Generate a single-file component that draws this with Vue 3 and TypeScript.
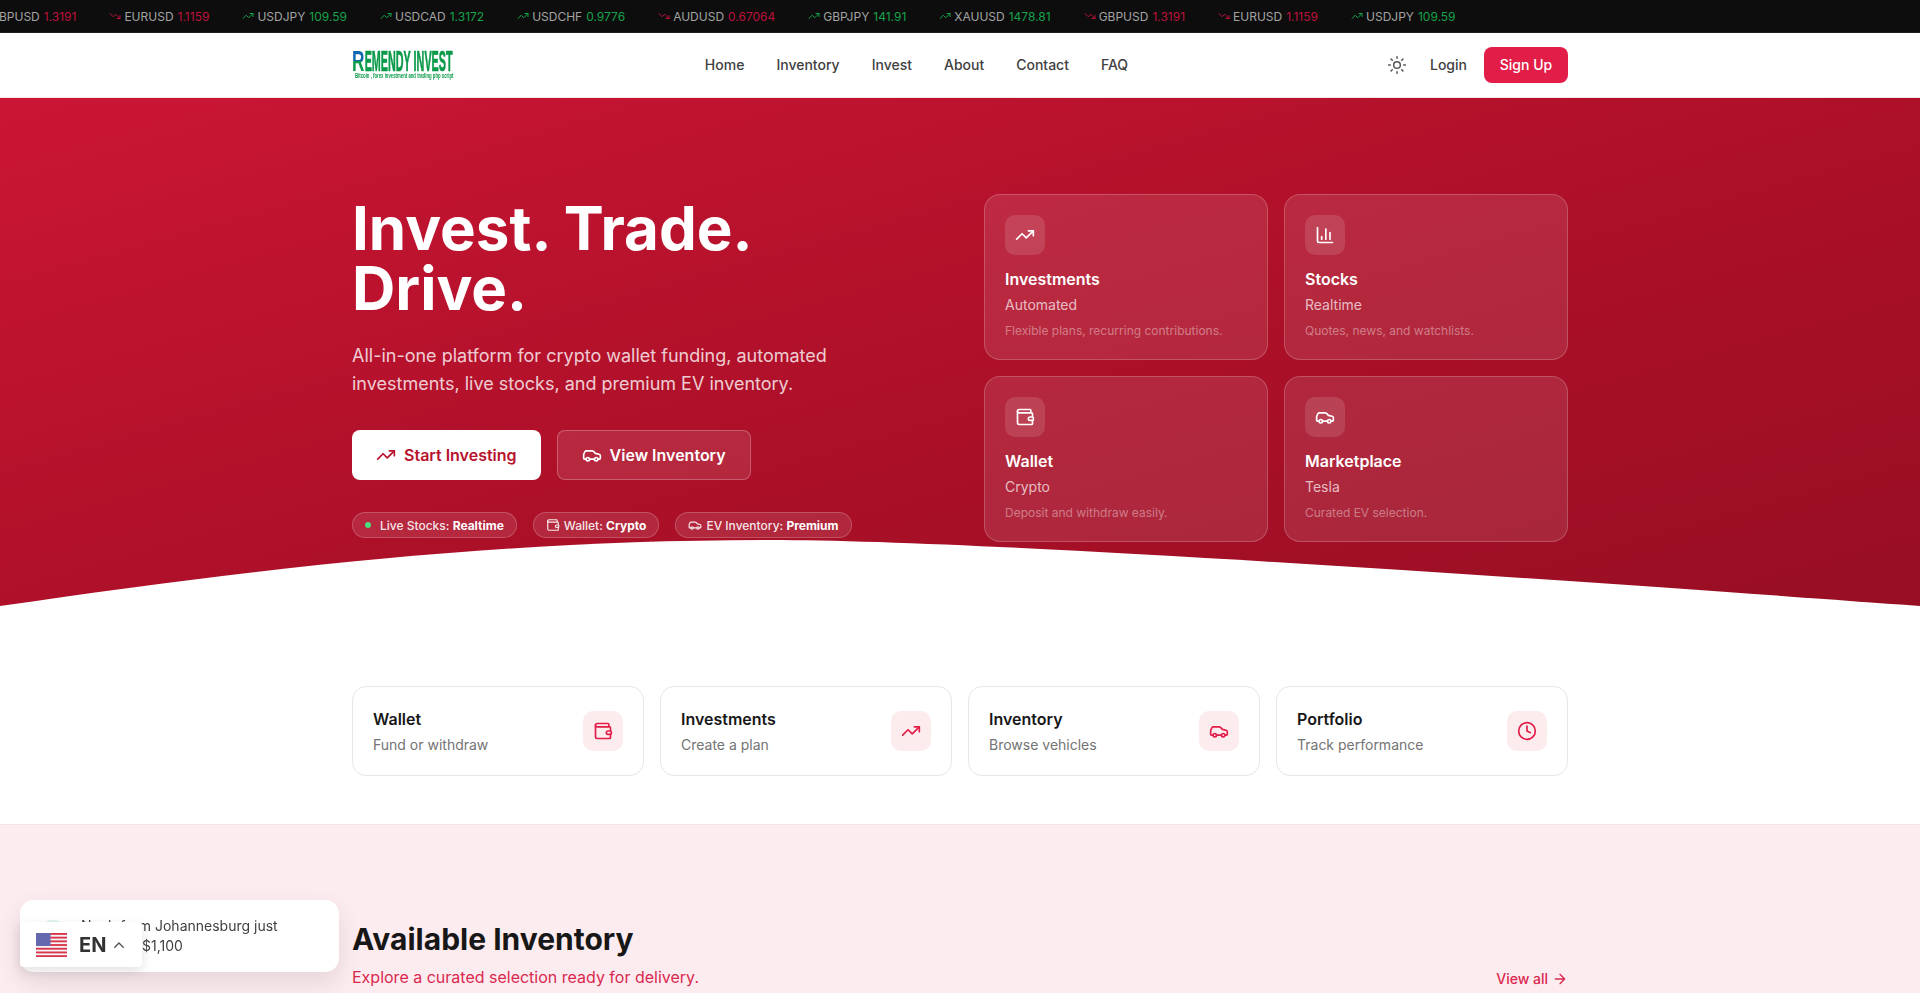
<script setup lang="ts">
interface Quote {
  pair: string
  price: string
  up: boolean
}

const quotes: Quote[] = [
  { pair: 'GBPUSD', price: '1.3191', up: false },
  { pair: 'EURUSD', price: '1.1159', up: false },
  { pair: 'USDJPY', price: '109.59', up: true },
  { pair: 'USDCAD', price: '1.3172', up: true },
  { pair: 'USDCHF', price: '0.9776', up: true },
  { pair: 'AUDUSD', price: '0.67064', up: false },
  { pair: 'GBPJPY', price: '141.91', up: true },
  { pair: 'XAUUSD', price: '1478.81', up: true },
  { pair: 'GBPUSD', price: '1.3191', up: false },
  { pair: 'EURUSD', price: '1.1159', up: false },
  { pair: 'USDJPY', price: '109.59', up: true },
]

const navLinks = ['Home', 'Inventory', 'Invest', 'About', 'Contact', 'FAQ']

type IconName = 'trend' | 'chart' | 'wallet' | 'car' | 'clock'

const heroCards: { title: string; sub: string; desc: string; icon: IconName }[] = [
  { title: 'Investments', sub: 'Automated', desc: 'Flexible plans, recurring contributions.', icon: 'trend' },
  { title: 'Stocks', sub: 'Realtime', desc: 'Quotes, news, and watchlists.', icon: 'chart' },
  { title: 'Wallet', sub: 'Crypto', desc: 'Deposit and withdraw easily.', icon: 'wallet' },
  { title: 'Marketplace', sub: 'Tesla', desc: 'Curated EV selection.', icon: 'car' },
]

const quickCards: { title: string; sub: string; icon: IconName }[] = [
  { title: 'Wallet', sub: 'Fund or withdraw', icon: 'wallet' },
  { title: 'Investments', sub: 'Create a plan', icon: 'trend' },
  { title: 'Inventory', sub: 'Browse vehicles', icon: 'car' },
  { title: 'Portfolio', sub: 'Track performance', icon: 'clock' },
]

const iconPaths: Record<IconName, string[]> = {
  trend: ['M16 7h6v6', 'm22 7-8.5 8.5-5-5L2 17'],
  chart: ['M3 3v16a2 2 0 0 0 2 2h16', 'M18 17V9', 'M13 17V5', 'M8 17v-3'],
  wallet: [
    'M19 7V4a1 1 0 0 0-1-1H5a2 2 0 0 0 0 4h15a1 1 0 0 1 1 1v4h-3a2 2 0 0 0 0 4h3a1 1 0 0 0 1-1v-2a1 1 0 0 0-1-1',
    'M3 5v14a2 2 0 0 0 2 2h15a1 1 0 0 0 1-1v-4',
  ],
  car: [
    'M19 17h2c.6 0 1-.4 1-1v-3c0-.9-.7-1.7-1.5-1.9C18.7 10.6 16 10 16 10s-1.3-1.4-2.2-2.3c-.5-.4-1.1-.7-1.8-.7H5c-.6 0-1.1.4-1.4.9l-1.4 2.9A3.7 3.7 0 0 0 2 12v4c0 .6.4 1 1 1h2',
    'M9 17h6',
    'M7 15a2 2 0 1 0 0 4 2 2 0 0 0 0-4',
    'M17 15a2 2 0 1 0 0 4 2 2 0 0 0 0-4',
  ],
  clock: ['M12 2a10 10 0 1 0 0 20 10 10 0 0 0 0-20', 'M12 6v6l4 2'],
}

const flagStripes = [0, 1, 2, 3, 4, 5, 6]
</script>

<template>
  <div class="page">
    <div class="ticker">
      <div class="ticker-track">
        <div v-for="(q, i) in quotes" :key="i" class="quote">
          <svg class="quote-arrow" :class="q.up ? 'up' : 'down'" viewBox="0 0 24 24">
            <path v-if="q.up" d="M16 7h6v6M22 7l-8.5 8.5-5-5L2 17" />
            <path v-else d="M16 17h6v-6M22 17l-8.5-8.5-5 5L2 7" />
          </svg>
          <span class="quote-pair">{{ q.pair }}</span>
          <span :class="q.up ? 'price-up' : 'price-down'">{{ q.price }}</span>
        </div>
      </div>
    </div>

    <header class="nav">
      <div class="container nav-row">
        <div class="logo">
          <div class="logo-name"><span class="logo-r">R</span>EMENDY INVEST</div>
          <div class="logo-tag">Bitcoin , forex investment and trading php script</div>
        </div>
        <nav class="nav-links">
          <a v-for="link in navLinks" :key="link">{{ link }}</a>
        </nav>
        <div class="nav-actions">
          <svg class="sun" viewBox="0 0 24 24">
            <circle cx="12" cy="12" r="4" />
            <path d="M12 2v2M12 20v2M4.93 4.93l1.41 1.41M17.66 17.66l1.41 1.41M2 12h2M20 12h2M6.34 17.66l-1.41 1.41M19.07 4.93l-1.41 1.41" />
          </svg>
          <a class="login">Login</a>
          <a class="signup">Sign Up</a>
        </div>
      </div>
    </header>

    <section class="hero">
      <div class="container hero-grid">
        <div class="hero-copy">
          <h1>Invest. Trade.<br>Drive.</h1>
          <p class="hero-lead">All-in-one platform for crypto wallet funding, automated investments, live stocks, and premium EV inventory.</p>
          <div class="hero-buttons">
            <a class="btn btn-white">
              <svg class="icon icon-20" viewBox="0 0 24 24"><path v-for="d in iconPaths.trend" :key="d" :d="d" /></svg>
              Start Investing
            </a>
            <a class="btn btn-glass">
              <svg class="icon icon-20" viewBox="0 0 24 24"><path v-for="d in iconPaths.car" :key="d" :d="d" /></svg>
              View Inventory
            </a>
          </div>
          <div class="hero-pills">
            <span class="pill"><i class="dot"></i><span>Live Stocks: <b>Realtime</b></span></span>
            <span class="pill">
              <svg class="icon icon-14" viewBox="0 0 24 24"><path v-for="d in iconPaths.wallet" :key="d" :d="d" /></svg>
              <span>Wallet: <b>Crypto</b></span>
            </span>
            <span class="pill">
              <svg class="icon icon-14" viewBox="0 0 24 24"><path v-for="d in iconPaths.car" :key="d" :d="d" /></svg>
              <span>EV Inventory: <b>Premium</b></span>
            </span>
          </div>
        </div>
        <div class="hero-cards">
          <div v-for="card in heroCards" :key="card.title" class="hero-card">
            <div class="hero-card-icon">
              <svg class="icon icon-20" viewBox="0 0 24 24"><path v-for="d in iconPaths[card.icon]" :key="d" :d="d" /></svg>
            </div>
            <div class="hero-card-title">{{ card.title }}</div>
            <div class="hero-card-sub">{{ card.sub }}</div>
            <div class="hero-card-desc">{{ card.desc }}</div>
          </div>
        </div>
      </div>
      <svg class="wave" viewBox="0 0 1920 100" preserveAspectRatio="none">
        <path d="M0 68 C 260 30, 500 2, 770 2 C 1000 2, 1620 46, 1920 68 V100 H0 Z" />
      </svg>
    </section>

    <section class="quick">
      <div class="container quick-grid">
        <div v-for="card in quickCards" :key="card.title" class="quick-card">
          <div>
            <div class="quick-title">{{ card.title }}</div>
            <div class="quick-sub">{{ card.sub }}</div>
          </div>
          <div class="quick-icon">
            <svg class="icon icon-20" viewBox="0 0 24 24"><path v-for="d in iconPaths[card.icon]" :key="d" :d="d" /></svg>
          </div>
        </div>
      </div>
    </section>

    <section class="inventory">
      <div class="container inventory-head">
        <div>
          <h2>Available Inventory</h2>
          <p>Explore a curated selection ready for delivery.</p>
        </div>
        <a class="view-all">
          View all
          <svg class="icon icon-16" viewBox="0 0 24 24"><path d="M5 12h14M12 5l7 7-7 7" /></svg>
        </a>
      </div>
    </section>

    <div class="toast">
      <div class="toast-avatar"></div>
      <div class="toast-text">Noah from Johannesburg just<br>received $1,100</div>
    </div>

    <div class="lang">
      <svg class="flag" viewBox="0 0 31 24">
        <rect width="31" height="24" fill="#f4f4f6" />
        <rect v-for="s in flagStripes" :key="s" x="0" :y="s * 3.7" width="31" height="1.85" fill="#d9344a" />
        <rect width="14.5" height="13" fill="#6468ae" />
      </svg>
      <span class="lang-code">EN</span>
      <svg class="caret" viewBox="0 0 24 24"><path d="M5 16l7-7 7 7" /></svg>
    </div>
  </div>
</template>

<style scoped>
.page {
  font-family: Inter, "Liberation Sans", sans-serif;
  color: #111;
  background: #fff;
}

.container {
  width: 1216px;
  margin: 0 auto;
}

.icon {
  fill: none;
  stroke: currentColor;
  stroke-width: 2;
  stroke-linecap: round;
  stroke-linejoin: round;
  flex-shrink: 0;
}

.icon-14 { width: 14px; height: 14px; }
.icon-16 { width: 16px; height: 16px; }
.icon-20 { width: 20px; height: 20px; }

/* ticker */
.ticker {
  height: 32px;
  background: #0d0d0d;
  border-bottom: 1px solid #1f1f1f;
  overflow: hidden;
}

.ticker-track {
  display: flex;
  gap: 33px;
  height: 32px;
  align-items: center;
  margin-left: -25px;
  white-space: nowrap;
}

.quote {
  display: flex;
  align-items: center;
  gap: 4px;
  font-size: 12px;
}

.quote-arrow {
  width: 12px;
  height: 12px;
  margin-right: -1px;
  fill: none;
  stroke-width: 2;
  stroke-linecap: round;
  stroke-linejoin: round;
}

.quote-arrow.up { stroke: #16a34a; }
.quote-arrow.down { stroke: #be123c; }
.quote-pair { color: #a3a3a3; }
.price-up { color: #16a34a; }
.price-down { color: #be123c; }

/* nav */
.nav {
  height: 64px;
  background: #fff;
  border-bottom: 1px solid #fbe4e8;
}

.nav-row {
  height: 64px;
  display: flex;
  align-items: center;
  justify-content: space-between;
}

.logo {
  width: 102px;
  white-space: nowrap;
}

.logo-name {
  font-family: "Liberation Sans", sans-serif;
  font-weight: 700;
  font-size: 29px;
  line-height: 22px;
  color: #0a9a4a;
  -webkit-text-stroke: 0.7px #0a9a4a;
  transform: scaleX(0.372);
  transform-origin: left center;
}

.logo-r {
  display: inline-block;
  margin-right: 13px;
  background: linear-gradient(180deg, #1266b0 0 48%, #0a9a4a 48% 100%);
  -webkit-background-clip: text;
  background-clip: text;
  color: transparent;
  -webkit-text-stroke: 0;
  transform: scaleX(1.6);
  transform-origin: left center;
}

.logo-tag {
  font-family: "Liberation Sans", sans-serif;
  font-weight: 700;
  font-size: 7px;
  line-height: 8px;
  color: #0a9a4a;
  margin-left: 3px;
  transform: scaleX(0.61);
  transform-origin: left center;
}

.nav-links {
  display: flex;
  gap: 32px;
  font-size: 14px;
  line-height: 20px;
  font-weight: 500;
  color: #404040;
  margin-right: 8px;
}

.nav-actions {
  display: flex;
  align-items: center;
  font-size: 14px;
  line-height: 20px;
  font-weight: 500;
  color: #404040;
}

.sun {
  width: 20px;
  height: 20px;
  fill: none;
  stroke: #555;
  stroke-width: 1.8;
  stroke-linecap: round;
  margin-right: 23px;
}

.login {
  margin-right: 17px;
}

.signup {
  height: 36px;
  width: 84px;
  display: flex;
  align-items: center;
  justify-content: center;
  border-radius: 8px;
  background: #e11d48;
  color: #fff;
}

/* hero */
.hero {
  position: relative;
  height: 540px;
  background: linear-gradient(to bottom right, #cb1635 0%, #ae1029 50%, #960e22 100%);
  color: #fff;
  overflow: hidden;
}

.hero-grid {
  position: relative;
  z-index: 1;
  display: grid;
  grid-template-columns: 1fr 584px;
  gap: 48px;
  align-items: center;
  padding-top: 96px;
}

.hero h1 {
  margin: 0;
  font-size: 60px;
  line-height: 60px;
  font-weight: 700;
}

.hero-lead {
  margin: 24px 0 0;
  max-width: 512px;
  font-size: 18px;
  line-height: 28px;
  color: rgba(255, 255, 255, 0.8);
}

.hero-buttons {
  display: flex;
  gap: 16px;
  margin-top: 32px;
}

.btn {
  height: 50px;
  box-sizing: border-box;
  display: flex;
  align-items: center;
  gap: 8px;
  padding: 0 24px;
  border-radius: 8px;
  font-size: 16px;
  font-weight: 600;
}

.btn-white {
  background: #fff;
  color: #b8112d;
}

.btn-glass {
  background: rgba(255, 255, 255, 0.1);
  border: 1px solid rgba(255, 255, 255, 0.25);
  color: #fff;
}

.hero-pills {
  display: flex;
  gap: 16px;
  margin-top: 32px;
}

.pill {
  height: 26px;
  box-sizing: border-box;
  display: flex;
  align-items: center;
  gap: 4px;
  padding: 0 12px;
  border-radius: 13px;
  background: rgba(255, 255, 255, 0.1);
  border: 1px solid rgba(255, 255, 255, 0.2);
  font-size: 12px;
  font-weight: 500;
  color: rgba(255, 255, 255, 0.9);
}

.pill b {
  font-weight: 700;
  color: #fff;
}

.dot {
  width: 6px;
  height: 6px;
  margin-right: 5px;
  border-radius: 50%;
  background: #4ade80;
}

.hero-cards {
  display: grid;
  grid-template-columns: 1fr 1fr;
  gap: 16px;
}

.hero-card {
  height: 166px;
  box-sizing: border-box;
  padding: 20px;
  border-radius: 16px;
  background: rgba(255, 255, 255, 0.1);
  border: 1px solid rgba(255, 255, 255, 0.2);
}

.hero-card-icon {
  width: 40px;
  height: 40px;
  display: flex;
  align-items: center;
  justify-content: center;
  border-radius: 10px;
  background: rgba(255, 255, 255, 0.12);
}

.hero-card-title {
  margin-top: 12px;
  font-size: 16px;
  line-height: 24px;
  font-weight: 600;
}

.hero-card-sub {
  margin-top: 4px;
  font-size: 14px;
  line-height: 20px;
  color: rgba(255, 255, 255, 0.7);
}

.hero-card-desc {
  margin-top: 8px;
  font-size: 12px;
  line-height: 16px;
  color: rgba(255, 255, 255, 0.4);
}

.wave {
  position: absolute;
  left: 0;
  bottom: 0;
  width: 100%;
  height: 100px;
  display: block;
}

.wave path {
  fill: #fff;
}

/* quick links */
.quick {
  padding: 48px 0;
  background: #fff;
  border-bottom: 1px solid #f0e4e6;
}

.quick-grid {
  display: grid;
  grid-template-columns: repeat(4, 1fr);
  gap: 16px;
}

.quick-card {
  height: 90px;
  box-sizing: border-box;
  padding: 0 20px;
  display: flex;
  align-items: center;
  justify-content: space-between;
  border: 1px solid #e7e7e7;
  border-radius: 14px;
  background: #fff;
}

.quick-title {
  font-size: 16px;
  line-height: 24px;
  font-weight: 600;
  color: #171717;
}

.quick-sub {
  margin-top: 4px;
  font-size: 14px;
  line-height: 20px;
  color: #737373;
}

.quick-icon {
  width: 40px;
  height: 40px;
  display: flex;
  align-items: center;
  justify-content: center;
  border-radius: 10px;
  background: #fdecee;
  color: #e11d48;
}

/* inventory */
.inventory {
  background: #fdecef;
  padding: 96px 0 80px;
}

.inventory-head {
  display: flex;
  align-items: flex-end;
  justify-content: space-between;
}

.inventory h2 {
  margin: 0;
  font-size: 30px;
  line-height: 36px;
  font-weight: 700;
  color: #171717;
}

.inventory p {
  margin: 8px 0 0;
  font-size: 16px;
  line-height: 24px;
  color: #d9284f;
}

.view-all {
  display: flex;
  align-items: center;
  gap: 4px;
  font-size: 14px;
  line-height: 20px;
  font-weight: 500;
  color: #d9284f;
}

/* floating widgets */
.toast {
  position: fixed;
  left: 20px;
  bottom: 21px;
  width: 319px;
  height: 72px;
  box-sizing: border-box;
  padding: 16px 17px;
  display: flex;
  align-items: center;
  gap: 12px;
  background: #fff;
  border-radius: 14px;
  box-shadow: 0 10px 25px rgba(0, 0, 0, 0.1);
  z-index: 10;
}

.toast-avatar {
  width: 32px;
  height: 32px;
  flex-shrink: 0;
  border-radius: 50%;
  background: #dcf5ea;
}

.toast-text {
  font-size: 14px;
  line-height: 20px;
  color: #404040;
}

.lang {
  position: fixed;
  left: 20px;
  bottom: 26px;
  width: 122px;
  height: 45px;
  box-sizing: border-box;
  padding-left: 16px;
  display: flex;
  align-items: center;
  background: #fff;
  border-radius: 4px;
  box-shadow: 0 4px 12px rgba(0, 0, 0, 0.12);
  z-index: 11;
}

.flag {
  width: 31px;
  height: 24px;
  flex-shrink: 0;
}

.lang-code {
  margin-left: 12px;
  font-size: 20px;
  font-weight: 700;
  color: #333;
}

.caret {
  width: 16px;
  height: 16px;
  margin-left: 5px;
  fill: none;
  stroke: #555;
  stroke-width: 2;
}
</style>

<style>
html, body {
  margin: 0;
  background: #fff;
}
</style>
